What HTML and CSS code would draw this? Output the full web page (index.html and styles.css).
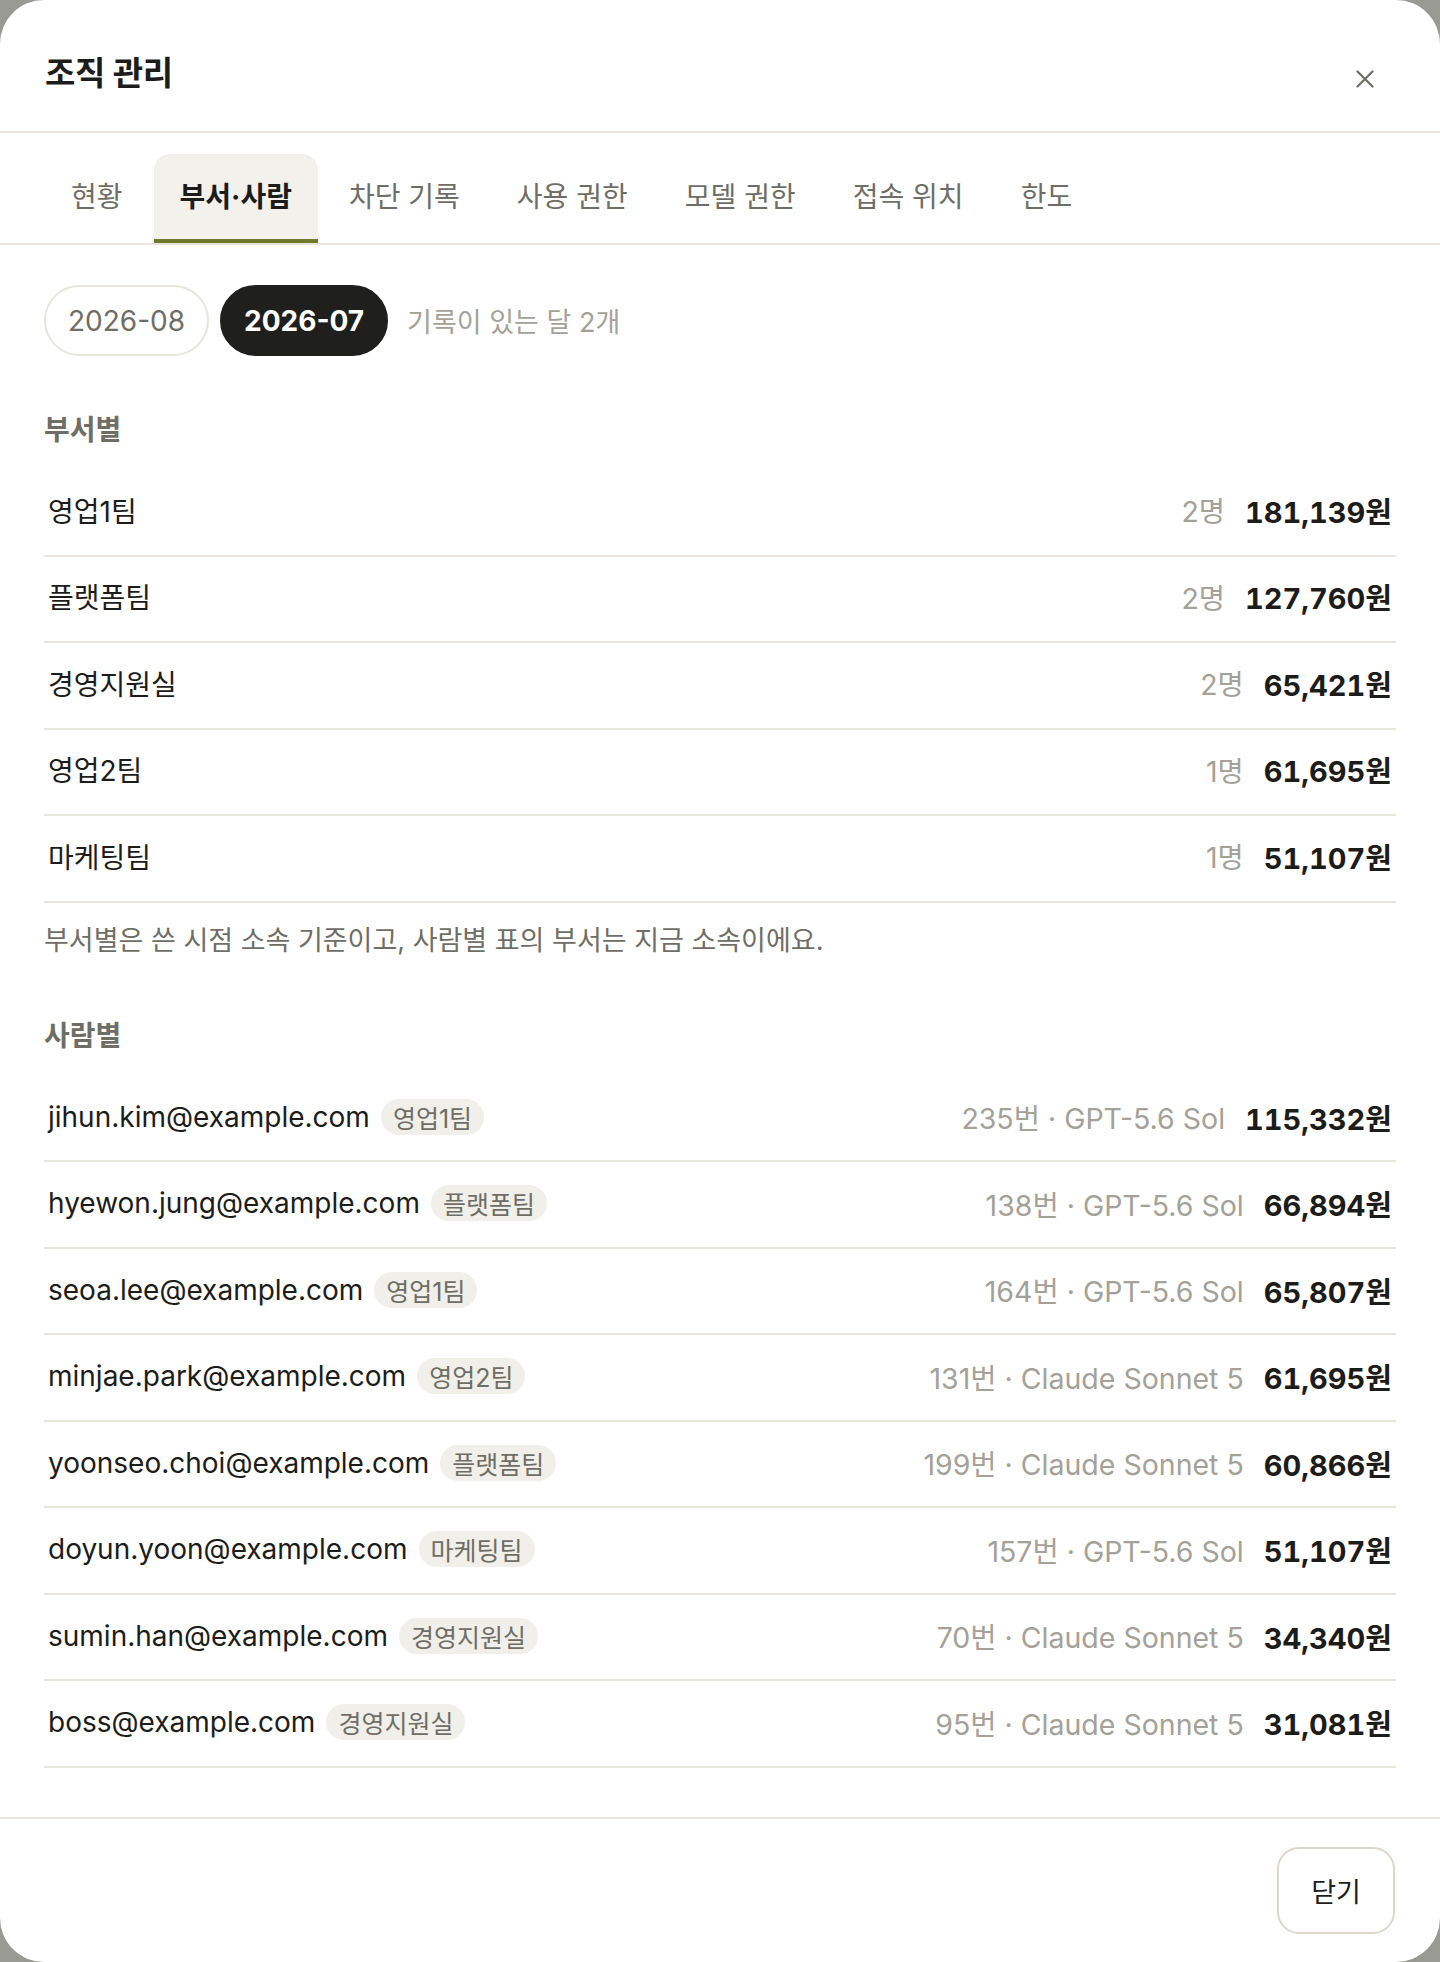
FILE: index.html
```html
<!DOCTYPE html>
<html lang="ko">
<head>
<meta charset="utf-8">
<title>조직 관리</title>
<link rel="stylesheet" href="styles.css">
</head>
<body>
<div class="modal">
  <header class="modal-header">
    <h1 class="modal-title">조직 관리</h1>
    <button class="icon-close" aria-label="닫기">
      <svg width="20" height="20" viewBox="0 0 20 20"><path d="M2.5 2.5L17.5 17.5M17.5 2.5L2.5 17.5" stroke="#6e6e66" stroke-width="2.2" stroke-linecap="round" fill="none"/></svg>
    </button>
  </header>
  <nav class="tabs">
    <button class="tab">현황</button>
    <button class="tab active">부서·사람</button>
    <button class="tab">차단 기록</button>
    <button class="tab">사용 권한</button>
    <button class="tab">모델 권한</button>
    <button class="tab">접속 위치</button>
    <button class="tab">한도</button>
  </nav>
  <div class="modal-body">
    <div class="months">
      <button class="month">2026-08</button>
      <button class="month active">2026-07</button>
      <span class="months-note">기록이 있는 달 2개</span>
    </div>

    <section class="section">
      <h2 class="section-title">부서별</h2>
      <ul class="rows">
        <li class="row row-dept"><span class="row-name">영업1팀</span><span class="row-right"><span class="meta">2명</span><span class="amount">181,139원</span></span></li>
        <li class="row row-dept"><span class="row-name">플랫폼팀</span><span class="row-right"><span class="meta">2명</span><span class="amount">127,760원</span></span></li>
        <li class="row row-dept"><span class="row-name">경영지원실</span><span class="row-right"><span class="meta">2명</span><span class="amount">65,421원</span></span></li>
        <li class="row row-dept"><span class="row-name">영업2팀</span><span class="row-right"><span class="meta">1명</span><span class="amount">61,695원</span></span></li>
        <li class="row row-dept"><span class="row-name">마케팅팀</span><span class="row-right"><span class="meta">1명</span><span class="amount">51,107원</span></span></li>
      </ul>
      <p class="note">부서별은 쓴 시점 소속 기준이고, 사람별 표의 부서는 지금 소속이에요.</p>
    </section>

    <section class="section section-people">
      <h2 class="section-title">사람별</h2>
      <ul class="rows">
        <li class="row"><span class="row-name"><span class="email">jihun.kim@example.com</span><span class="tag">영업1팀</span></span><span class="row-right"><span class="meta">235번 · GPT-5.6 Sol</span><span class="amount">115,332원</span></span></li>
        <li class="row"><span class="row-name"><span class="email">hyewon.jung@example.com</span><span class="tag">플랫폼팀</span></span><span class="row-right"><span class="meta">138번 · GPT-5.6 Sol</span><span class="amount">66,894원</span></span></li>
        <li class="row"><span class="row-name"><span class="email">seoa.lee@example.com</span><span class="tag">영업1팀</span></span><span class="row-right"><span class="meta">164번 · GPT-5.6 Sol</span><span class="amount">65,807원</span></span></li>
        <li class="row"><span class="row-name"><span class="email">minjae.park@example.com</span><span class="tag">영업2팀</span></span><span class="row-right"><span class="meta">131번 · Claude Sonnet 5</span><span class="amount">61,695원</span></span></li>
        <li class="row"><span class="row-name"><span class="email">yoonseo.choi@example.com</span><span class="tag">플랫폼팀</span></span><span class="row-right"><span class="meta">199번 · Claude Sonnet 5</span><span class="amount">60,866원</span></span></li>
        <li class="row"><span class="row-name"><span class="email">doyun.yoon@example.com</span><span class="tag">마케팅팀</span></span><span class="row-right"><span class="meta">157번 · GPT-5.6 Sol</span><span class="amount">51,107원</span></span></li>
        <li class="row"><span class="row-name"><span class="email">sumin.han@example.com</span><span class="tag">경영지원실</span></span><span class="row-right"><span class="meta">70번 · Claude Sonnet 5</span><span class="amount">34,340원</span></span></li>
        <li class="row"><span class="row-name"><span class="email">boss@example.com</span><span class="tag">경영지원실</span></span><span class="row-right"><span class="meta">95번 · Claude Sonnet 5</span><span class="amount">31,081원</span></span></li>
      </ul>
    </section>
  </div>
  <footer class="modal-footer">
    <button class="btn-close">닫기</button>
  </footer>
</div>
</body>
</html>
```

FILE: styles.css
```css
* { box-sizing: border-box; }

html, body {
  margin: 0;
  padding: 0;
}

body {
  background: #9a9a94;
  font-family: Inter, "Noto Sans CJK KR", sans-serif;
  color: #1c1c1a;
}

button {
  font-family: inherit;
  cursor: pointer;
}

.modal {
  background: #ffffff;
  min-height: 1962px;
  border-radius: 44px;
  overflow: hidden;
  display: flex;
  flex-direction: column;
}

/* Header */
.modal-header {
  height: 133px;
  border-bottom: 2px solid #e8e5dd;
  display: flex;
  align-items: center;
  justify-content: space-between;
  padding: 14px 55px 0 45px;
}

.modal-title {
  margin: 0;
  font-size: 33px;
  line-height: 40px;
  font-weight: 700;
  color: #1c1c1a;
  letter-spacing: -0.3px;
}

.icon-close {
  width: 40px;
  height: 40px;
  margin-top: 12px;
  border: 0;
  background: none;
  padding: 0;
  display: flex;
  align-items: center;
  justify-content: center;
}

/* Tabs */
.tabs {
  display: flex;
  gap: 5px;
  padding: 21px 45px 0;
  border-bottom: 2px solid #e8e5dd;
}

.tab {
  height: 89px;
  padding: 0 26px 3px;
  font-size: 28px;
  color: #6e6e66;
  background: none;
  border: 0;
  border-bottom: 4px solid transparent;
  border-radius: 16px 16px 0 0;
}

.tab.active {
  background: #f2f1ec;
  color: #1c1c1a;
  font-weight: 700;
  border-bottom-color: #6f7a2c;
}

/* Body */
.modal-body {
  flex: 1;
  padding: 40px 44px 49px;
}

.months {
  display: flex;
  align-items: center;
  gap: 11px;
}

.month {
  height: 71px;
  padding: 0 22px;
  border-radius: 36px;
  border: 2px solid #e8e5dd;
  background: #ffffff;
  font-size: 28px;
  color: #6e6e66;
}

.month.active {
  background: #1f1f1d;
  border-color: #1f1f1d;
  color: #ffffff;
  font-weight: 700;
}

.months-note {
  margin-left: 8px;
  font-size: 27px;
  color: #a3a198;
}

.section-title {
  margin: 54px 0 20px;
  font-size: 28px;
  line-height: 40px;
  font-weight: 700;
  color: #6e6e66;
}

.section-people .section-title {
  margin-top: 57px;
}

.rows {
  list-style: none;
  margin: 0;
  padding: 0;
}

.row {
  height: 86.5px;
  border-bottom: 2px solid #e8e5dd;
  display: flex;
  align-items: center;
  justify-content: space-between;
  padding: 0 4px 2px;
  font-size: 28px;
}

.row-dept {
  padding-bottom: 5px;
}

.row-name {
  display: flex;
  align-items: center;
  color: #1c1c1a;
}

.tag {
  margin-left: 11px;
  height: 36px;
  padding: 0 12px;
  border-radius: 18px;
  background: #f1efe9;
  color: #6e6e66;
  font-size: 25px;
  display: inline-flex;
  align-items: center;
}

.row-right {
  display: flex;
  align-items: center;
  gap: 20px;
}

.meta {
  font-size: 28.5px;
  color: #a3a198;
}

.amount {
  font-size: 29px;
  font-weight: 700;
  color: #1c1c1a;
  font-variant-numeric: tabular-nums;
}

.note {
  margin: 20px 0 0;
  font-size: 27px;
  line-height: 36px;
  color: #6e6e66;
}

/* Footer */
.modal-footer {
  border-top: 2px solid #e8e5dd;
  padding: 28px 45px 28px;
  display: flex;
  justify-content: flex-end;
}

.btn-close {
  width: 118px;
  height: 87px;
  border: 2px solid #dcd8cd;
  border-radius: 22px;
  background: #ffffff;
  font-size: 27px;
  color: #1c1c1a;
}
```
